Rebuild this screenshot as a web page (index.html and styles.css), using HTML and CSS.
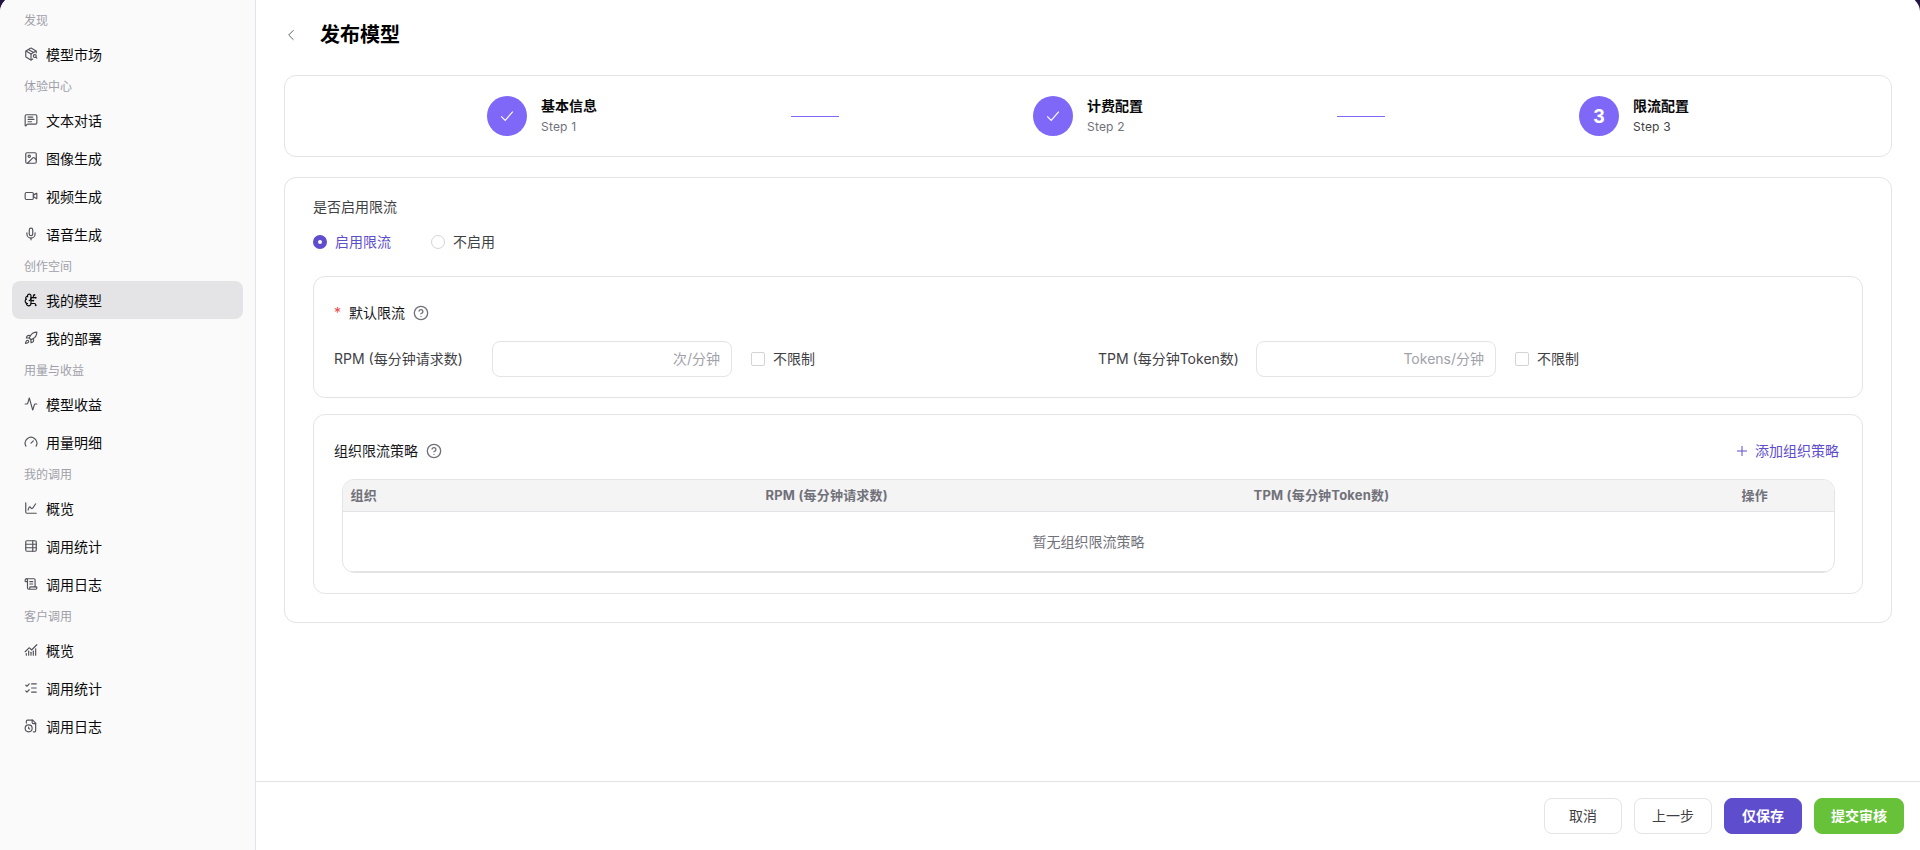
FILE: index.html
```html
<!DOCTYPE html>
<html lang="zh-CN">
<head>
    <meta charset="UTF-8">
    <meta name="viewport" content="width=device-width, initial-scale=1.0">
    <title>发布模型</title>
    <link rel="stylesheet" href="styles.css">
</head>
<body>
    <div class="app">
        <aside class="sidebar">
            <div class="nav-label">发现</div>
            <a class="nav-item">
                <svg class="icon" viewBox="0 0 24 24"><path d="M21 10V8a2 2 0 0 0-1-1.730l-7-4a2 2 0 0 0-2 0l-7 4A2 2 0 0 0 3 8v8a2 2 0 0 0 1 1.730l7 4a2 2 0 0 0 2 0l2-1.140"/><path d="m7.5 4.27 9 5.15"/><path d="M3.29 7 12 12l8.71-5"/><path d="M12 22V12"/><circle cx="18.5" cy="15.5" r="2.5"/><path d="M20.27 17.27 22 19"/></svg>
                <span>模型市场</span>
            </a>
            <div class="nav-label">体验中心</div>
            <a class="nav-item">
                <svg class="icon" viewBox="0 0 24 24"><path d="M22 17a2 2 0 0 1-2 2H6.8a2 2 0 0 0-1.4.6l-2.2 2.2A.7.7 0 0 1 2 21.3V5a2 2 0 0 1 2-2h16a2 2 0 0 1 2 2z"/><path d="M7 11h10"/><path d="M7 15h6"/><path d="M7 7h8"/></svg>
                <span>文本对话</span>
            </a>
            <a class="nav-item">
                <svg class="icon" viewBox="0 0 24 24"><rect x="3" y="3" width="18" height="18" rx="2"/><circle cx="9" cy="9" r="2"/><path d="m21 15-3.1-3.1a2 2 0 0 0-2.8 0L6 21"/></svg>
                <span>图像生成</span>
            </a>
            <a class="nav-item">
                <svg class="icon" viewBox="0 0 24 24"><rect x="2" y="6" width="14" height="12" rx="2"/><path d="m16 13 5.2 3.5a.5.5 0 0 0 .8-.4V7.9a.5.5 0 0 0-.8-.4L16 10.5"/></svg>
                <span>视频生成</span>
            </a>
            <a class="nav-item">
                <svg class="icon" viewBox="0 0 24 24"><path d="M12 19v3"/><path d="M19 10v2a7 7 0 0 1-14 0v-2"/><rect x="9" y="2" width="6" height="13" rx="3"/></svg>
                <span>语音生成</span>
            </a>
            <div class="nav-label">创作空间</div>
            <a class="nav-item active">
                <svg class="icon" viewBox="0 0 24 24"><path d="M12 5a3 3 0 1 0-5.997.125 4 4 0 0 0-2.526 5.77 4 4 0 0 0 .556 6.588A4 4 0 1 0 12 18Z"/><path d="M9 13a4.5 4.5 0 0 0 3-4"/><path d="M6 5.1a3 3 0 0 0 .4 1.4"/><path d="M3.5 10.9a4 4 0 0 1 .6-.4"/><path d="M6 18a4 4 0 0 1-2-.5"/><path d="M12 13h4"/><path d="M12 18h6a2 2 0 0 1 2 2v1"/><path d="M12 8h8"/><path d="M16 8V5a2 2 0 0 1 2-2"/><circle cx="16" cy="13" r=".5"/><circle cx="18" cy="3" r=".5"/><circle cx="20" cy="21" r=".5"/><circle cx="20" cy="8" r=".5"/></svg>
                <span>我的模型</span>
            </a>
            <a class="nav-item">
                <svg class="icon" viewBox="0 0 24 24"><path d="M4.5 16.5c-1.5 1.26-2 5-2 5s3.74-.5 5-2c.71-.84.7-2.13-.09-2.91a2.18 2.18 0 0 0-2.91-.09z"/><path d="m12 15-3-3a22 22 0 0 1 2-3.95A12.88 12.88 0 0 1 22 2c0 2.72-.78 7.5-6 11a22.35 22.35 0 0 1-4 2z"/><path d="M9 12H4s.55-3.03 2-4c1.62-1.08 5 0 5 0"/><path d="M12 15v5s3.03-.55 4-2c1.08-1.62 0-5 0-5"/></svg>
                <span>我的部署</span>
            </a>
            <div class="nav-label">用量与收益</div>
            <a class="nav-item">
                <svg class="icon" viewBox="0 0 24 24"><path d="M22 12h-2.5a2 2 0 0 0-1.9 1.5l-2.4 8.3a.25.25 0 0 1-.5 0L9.3 2.2a.25.25 0 0 0-.5 0l-2.3 8.3A2 2 0 0 1 4.5 12H2"/></svg>
                <span>模型收益</span>
            </a>
            <a class="nav-item">
                <svg class="icon" viewBox="0 0 24 24"><path d="m12 14 4-4"/><path d="M3.34 19a10 10 0 1 1 17.32 0"/></svg>
                <span>用量明细</span>
            </a>
            <div class="nav-label">我的调用</div>
            <a class="nav-item">
                <svg class="icon" viewBox="0 0 24 24"><path d="M3 3v16a2 2 0 0 0 2 2h16"/><path d="M7 15.5c.7-2.500 1.300-5.500 3-5.500 1.800 0 1.700 3 3.500 3C16 13 17.500 7 20 5"/></svg>
                <span>概览</span>
            </a>
            <a class="nav-item">
                <svg class="icon" viewBox="0 0 24 24"><rect x="3" y="3" width="18" height="18" rx="2"/><path d="M15 3v18"/><path d="M3 9h18"/><path d="M3 15h18"/></svg>
                <span>调用统计</span>
            </a>
            <a class="nav-item">
                <svg class="icon" viewBox="0 0 24 24"><path d="M15 12h-5"/><path d="M15 8h-5"/><path d="M19 17V5a2 2 0 0 0-2-2H4"/><path d="M8 21h12a2 2 0 0 0 2-2v-1a1 1 0 0 0-1-1H11a1 1 0 0 0-1 1v1a2 2 0 1 1-4 0V5a2 2 0 1 0-4 0v2a1 1 0 0 0 1 1h3"/></svg>
                <span>调用日志</span>
            </a>
            <div class="nav-label">客户调用</div>
            <a class="nav-item">
                <svg class="icon" viewBox="0 0 24 24"><path d="M12 16v5"/><path d="M16 14v7"/><path d="M20 10v11"/><path d="m22 3-8.600 8.600a.5.5 0 0 1-.7 0L9.400 8.400a.5.5 0 0 0-.7 0L2 15"/><path d="M4 18v3"/><path d="M8 14v7"/></svg>
                <span>概览</span>
            </a>
            <a class="nav-item">
                <svg class="icon" viewBox="0 0 24 24"><path d="M13 5h8"/><path d="M13 12h8"/><path d="M13 19h8"/><path d="m3 17 2 2 4-4"/><path d="m3 7 2 2 4-4"/></svg>
                <span>调用统计</span>
            </a>
            <a class="nav-item">
                <svg class="icon" viewBox="0 0 24 24"><path d="M16 22h2a2 2 0 0 0 2-2V7l-5-5H6a2 2 0 0 0-2 2v3"/><path d="M14 2v4a2 2 0 0 0 2 2h4"/><circle cx="8" cy="16" r="6"/><path d="M8 14v2.200l1.600 1"/></svg>
                <span>调用日志</span>
            </a>
        </aside>

        <main class="main">
            <div class="content">
                <header class="page-header">
                    <svg class="back" viewBox="0 0 14 14"><path d="M9.500 2.200 4.700 7l4.800 4.800"/></svg>
                    <h1>发布模型</h1>
                </header>

                <section class="card steps">
                    <div class="step">
                        <div class="step-circle"><svg viewBox="0 0 18 18"><path d="m3.200 9.300 4 4 7.600-8.600"/></svg></div>
                        <div class="step-text">
                            <div class="step-title">基本信息</div>
                            <div class="step-sub">Step 1</div>
                        </div>
                    </div>
                    <div class="step-line"></div>
                    <div class="step">
                        <div class="step-circle"><svg viewBox="0 0 18 18"><path d="m3.200 9.300 4 4 7.600-8.600"/></svg></div>
                        <div class="step-text">
                            <div class="step-title">计费配置</div>
                            <div class="step-sub">Step 2</div>
                        </div>
                    </div>
                    <div class="step-line"></div>
                    <div class="step current">
                        <div class="step-circle">3</div>
                        <div class="step-text">
                            <div class="step-title">限流配置</div>
                            <div class="step-sub">Step 3</div>
                        </div>
                    </div>
                </section>

                <section class="card form-card">
                    <div class="form-label">是否启用限流</div>
                    <div class="radio-group">
                        <label class="radio checked"><span class="radio-dot"></span>启用限流</label>
                        <label class="radio"><span class="radio-dot"></span>不启用</label>
                    </div>

                    <div class="card panel">
                        <div class="panel-title">
                            <span class="required">*</span>
                            <span>默认限流</span>
                            <svg class="help" viewBox="0 0 24 24"><circle cx="12" cy="12" r="10"/><path d="M9.090 9a3 3 0 0 1 5.830 1c0 2-3 3-3 3"/><path d="M12 17h.01"/></svg>
                        </div>
                        <div class="limits">
                            <div class="limit">
                                <span class="limit-label">RPM (每分钟请求数)</span>
                                <div class="input">次/分钟</div>
                                <label class="checkbox"><span class="checkbox-box"></span>不限制</label>
                            </div>
                            <div class="limit">
                                <span class="limit-label">TPM (每分钟Token数)</span>
                                <div class="input">Tokens/分钟</div>
                                <label class="checkbox"><span class="checkbox-box"></span>不限制</label>
                            </div>
                        </div>
                    </div>

                    <div class="card panel org-panel">
                        <div class="panel-title">
                            <span>组织限流策略</span>
                            <svg class="help" viewBox="0 0 24 24"><circle cx="12" cy="12" r="10"/><path d="M9.090 9a3 3 0 0 1 5.830 1c0 2-3 3-3 3"/><path d="M12 17h.01"/></svg>
                            <a class="add-link"><svg viewBox="0 0 12 12"><path d="M6 1v10M1 6h10"/></svg>添加组织策略</a>
                        </div>
                        <div class="table">
                            <div class="table-head">
                                <span>组织</span>
                                <span>RPM (每分钟请求数)</span>
                                <span>TPM (每分钟Token数)</span>
                                <span>操作</span>
                            </div>
                            <div class="table-empty">暂无组织限流策略</div>
                        </div>
                    </div>
                </section>
            </div>

            <footer class="footer">
                <button type="button" class="btn">取消</button>
                <button type="button" class="btn">上一步</button>
                <button type="button" class="btn btn-primary">仅保存</button>
                <button type="button" class="btn btn-success">提交审核</button>
            </footer>
        </main>
    </div>
</body>
</html>
```
FILE: styles.css
```css
* {
    margin: 0;
    padding: 0;
    box-sizing: border-box;
}

body {
    font-family: Inter, "Noto Sans CJK SC", sans-serif;
    font-size: 14px;
    line-height: 20px;
    color: #3f3f46;
    background: #231542;
}

.app {
    display: flex;
    height: 854px;
    margin-top: -4px;
    padding-top: 4px;
    background: linear-gradient(90deg, #fafafa 255px, #e4e4e7 255px, #e4e4e7 256px, #fff 256px);
    border-radius: 16px 16px 0 0;
    overflow: hidden;
}

/* sidebar */
.sidebar {
    width: 256px;
    flex-shrink: 0;
    padding: 7px 12px 0;
    background: #fafafa;
    border-right: 1px solid #e4e4e7;
}

.nav-label {
    height: 28px;
    padding-left: 12px;
    font-size: 12px;
    line-height: 28px;
    color: #9f9fa9;
}

.nav-item {
    display: flex;
    align-items: center;
    gap: 8px;
    height: 38px;
    padding: 0 12px;
    border-radius: 8px;
    color: #09090b;
    line-height: 21px;
}

.nav-item.active {
    background: #e4e4e7;
}

.icon {
    width: 14px;
    height: 14px;
    fill: none;
    stroke: #52525b;
    stroke-width: 2;
    stroke-linecap: round;
    stroke-linejoin: round;
}

.nav-item.active .icon {
    stroke: #09090b;
}

/* main column */
.main {
    flex: 1;
    display: flex;
    flex-direction: column;
}

.content {
    flex: 1;
    padding: 20px 28px 0;
}

.page-header {
    display: flex;
    align-items: center;
    gap: 22px;
    height: 30px;
    margin-bottom: 25px;
}

.page-header h1 {
    font-size: 20px;
    line-height: 30px;
    font-weight: 700;
    color: #000;
}

.back {
    width: 14px;
    height: 14px;
    fill: none;
    stroke: #606266;
    stroke-width: 1;
}

.card {
    border: 1px solid #e4e4e7;
    border-radius: 12px;
    background: #fff;
}

/* steps */
.steps {
    display: flex;
    align-items: center;
    justify-content: space-between;
    height: 82px;
    padding: 0 202px;
    margin-bottom: 20px;
}

.step {
    display: flex;
    align-items: center;
    gap: 14px;
}

.step-circle {
    display: flex;
    align-items: center;
    justify-content: center;
    width: 40px;
    height: 40px;
    border-radius: 50%;
    background: #7f67f8;
    color: #fff;
    font-family: "Liberation Sans", Arial, sans-serif;
    font-size: 20px;
    font-weight: 700;
}

.step-circle svg {
    width: 18px;
    height: 18px;
    fill: none;
    stroke: #fff;
    stroke-width: 1.2;
}

.step-title {
    margin-bottom: 1px;
    font-weight: 700;
    color: #09090b;
}

.step-sub {
    font-size: 12px;
    line-height: 19px;
    letter-spacing: 0.2px;
    color: #71717a;
}

.step.current .step-sub {
    color: #3f3f46;
}

.step-line {
    width: 48px;
    height: 1px;
    background: #7f67f8;
}

/* form */
.form-card {
    height: 446px;
    padding: 19px 28px 0;
}

.form-label {
    margin-bottom: 15px;
}

.radio-group {
    display: flex;
    gap: 40px;
    margin-bottom: 24px;
}

.radio {
    display: flex;
    align-items: center;
    gap: 8px;
}

.radio-dot {
    width: 14px;
    height: 14px;
    border: 1px solid #d4d4d8;
    border-radius: 50%;
}

.radio.checked {
    color: #5e4dcd;
}

.radio.checked .radio-dot {
    border: 5px solid #5e4dcd;
}

.panel {
    height: 122px;
    padding: 26px 20px 0;
    margin-bottom: 16px;
}

.panel-title {
    display: flex;
    align-items: center;
    gap: 8px;
    height: 20px;
    color: #18181b;
}

.required {
    color: #ef4444;
}

.help {
    width: 16px;
    height: 16px;
    fill: none;
    stroke: #71717a;
    stroke-width: 2;
    stroke-linecap: round;
    stroke-linejoin: round;
}

.limits {
    display: grid;
    grid-template-columns: 1fr 1fr;
    gap: 20px;
    margin-top: 18px;
}

.limit {
    display: flex;
    align-items: center;
}

.limit-label {
    width: 158px;
}

.input {
    width: 240px;
    height: 36px;
    padding: 0 11px;
    border: 1px solid #e4e4e7;
    border-radius: 8px;
    line-height: 34px;
    text-align: right;
    color: #a1a1aa;
}

.checkbox {
    display: flex;
    align-items: center;
    gap: 8px;
    margin-left: 19px;
}

.checkbox-box {
    width: 14px;
    height: 14px;
    border: 1px solid #d4d4d8;
    border-radius: 2px;
}

.org-panel {
    height: 180px;
    margin-bottom: 0;
}

.add-link {
    display: flex;
    align-items: center;
    gap: 7px;
    margin-left: auto;
    margin-right: 3px;
    color: #5e4dcd;
}

.add-link svg {
    width: 12px;
    height: 12px;
    fill: none;
    stroke: #5e4dcd;
    stroke-width: 1;
}

.table {
    height: 94px;
    margin: 18px 7px 0 8px;
    border: 1px solid #e4e4e7;
    border-radius: 12px;
    overflow: hidden;
}

.table-head {
    display: grid;
    grid-template-columns: 415px 488px 488px 1fr;
    height: 32px;
    border-bottom: 1px solid #e4e4e7;
    background: #f4f4f5;
    font-size: 13px;
    line-height: 31px;
    font-weight: 700;
    letter-spacing: 0.2px;
    color: #71717a;
}

.table-head span {
    padding: 0 7.5px;
}

.table-empty {
    height: 60px;
    border-bottom: 1px solid #e4e4e7;
    line-height: 59px;
    text-align: center;
    color: #71717a;
}

/* footer */
.footer {
    display: flex;
    justify-content: flex-end;
    gap: 12px;
    height: 69px;
    padding: 16px;
    border-top: 1px solid #e4e4e7;
}

.btn {
    min-width: 78px;
    height: 36px;
    padding: 0 16px 2px;
    border: 1px solid #e4e4e7;
    border-radius: 8px;
    background: #fff;
    font-family: inherit;
    font-size: 14px;
    color: #3f3f46;
}

.btn-primary {
    border-color: #5e4dcd;
    background: #5e4dcd;
    color: #fff;
    font-weight: 700;
}

.btn-success {
    border-color: #67c23a;
    background: #67c23a;
    color: #fff;
    font-weight: 700;
}
```
